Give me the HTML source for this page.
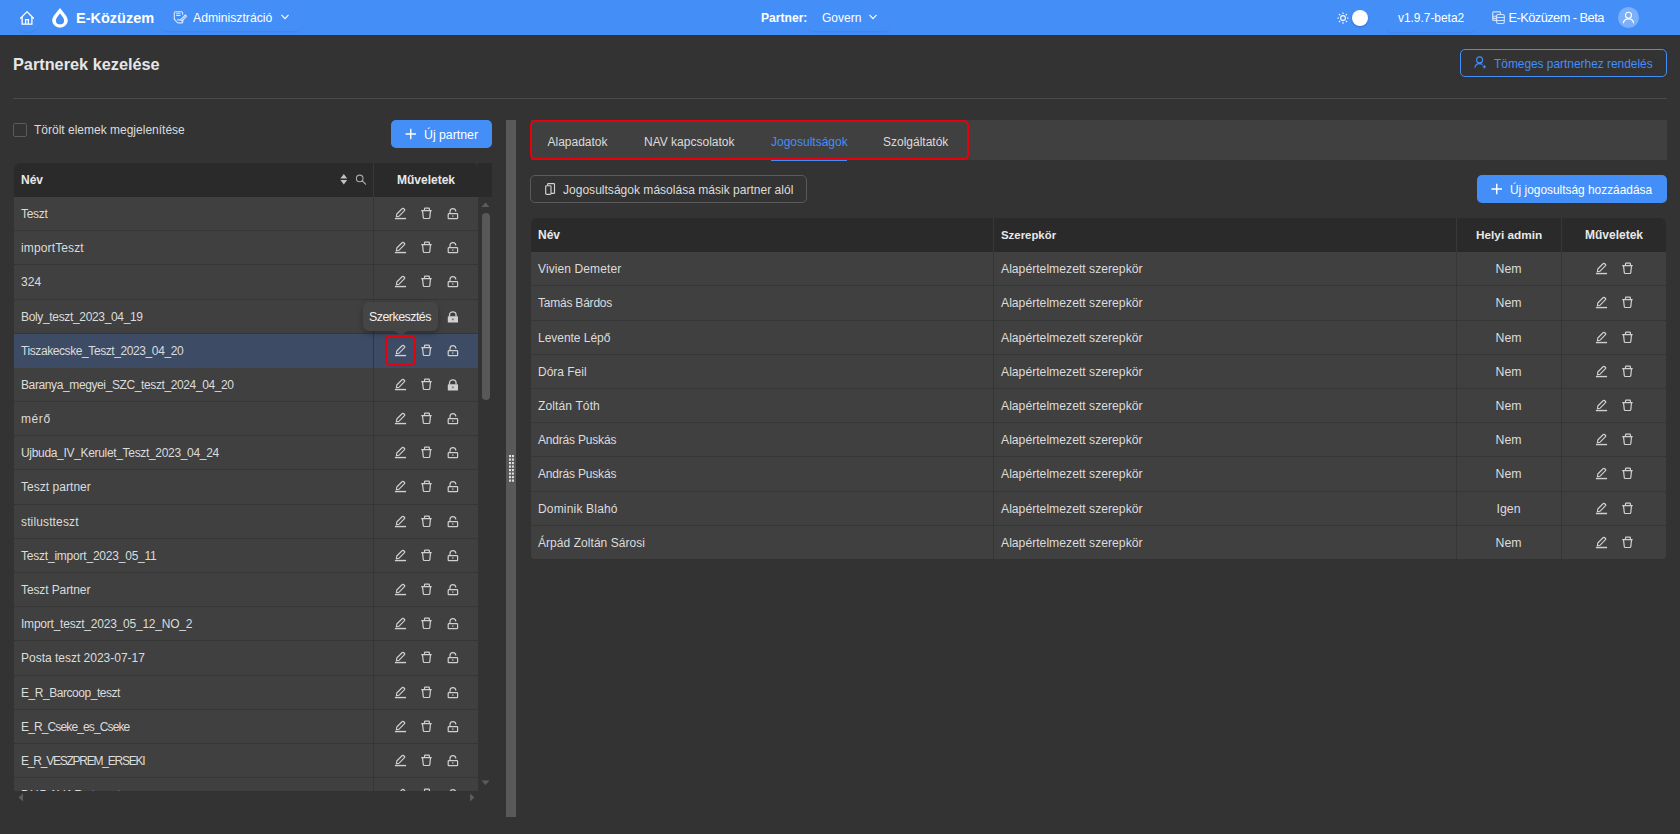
<!DOCTYPE html><html><head><meta charset="utf-8"><title>Partnerek kezelése</title><style>
*{box-sizing:border-box;margin:0;padding:0}
html,body{width:1680px;height:834px;overflow:hidden;background:#333333;font-family:"Liberation Sans",sans-serif;color:#dcdcdc}
.a{position:absolute;white-space:nowrap}
.ic{position:absolute;overflow:visible}
#hdr{position:absolute;left:0;top:0;width:1680px;height:35px;background:#448ef8;color:#fff}
.t12{font-size:12px}
.row{position:absolute;height:34.18px;background:#404040}
.rowdiv{position:absolute;height:1px;background:#363636}
</style></head><body>
<div id="hdr">
<div class="a" style="left:14px;top:5px;width:27px;height:27px;border-radius:14px;box-shadow:0 2px 2px -1px rgba(0,0,0,0.07)"></div>
<div class="a" style="left:160px;top:4px;width:143px;height:27px;border-radius:7px;box-shadow:0 2px 2px -1px rgba(0,0,0,0.07)"></div>
<div class="a" style="left:807px;top:4px;width:84px;height:27px;border-radius:7px;box-shadow:0 2px 2px -1px rgba(0,0,0,0.07)"></div>
<div class="a" style="left:1385px;top:4px;width:92px;height:28px;border-radius:7px;box-shadow:0 2px 2px -1px rgba(0,0,0,0.07)"></div>
<svg class="ic" style="left:19px;top:9px" width="16" height="16" viewBox="0 0 16 16"><path d="M1.6 9.2 L8 2.6 L14.4 9.2" fill="none" stroke="#fff" stroke-width="1.3" stroke-linejoin="round" stroke-linecap="round"/><path d="M3.1 7.9 V15.2 H12.9 V7.9" fill="none" stroke="#fff" stroke-width="1.3"/><path d="M6.6 15.2 V10.6 H9.4 V15.2" fill="none" stroke="#fff" stroke-width="1.3"/></svg>
<svg class="ic" style="left:51px;top:7px" width="18" height="21" viewBox="0 0 18 21"><path d="M9 1 C 6 5, 1.2 9.5, 1.2 13.4 A7.8 7.3 0 0 0 16.8 13.4 C16.8 9.5, 12 5, 9 1 Z M9 6.6 C 7.2 9, 4.9 11.2, 4.9 13.4 A4.1 3.9 0 0 0 13.1 13.4 C13.1 11.2, 10.8 9, 9 6.6 Z" fill="#fff" fill-rule="evenodd"/></svg>
<div class="a" style="left:76px;top:9.6px;font-size:14.5px;font-weight:bold;line-height:17px;letter-spacing:0px">E-Közüzem</div>
<svg class="ic" style="left:173px;top:10px" width="15" height="15" viewBox="0 0 15 15"><g opacity="0.78" fill="none" stroke="#fff" stroke-width="1.15" stroke-linejoin="round" stroke-linecap="round"><path d="M1.3 9.2 V2.8 Q1.3 1.7 2.4 1.7 H8.6 Q9.6 1.7 9.6 2.8 V4.3"/><path d="M1.3 9.2 L4.2 12.3 Q4.6 12.9 5.4 12.9 H8.8 Q9.8 12.9 9.8 11.9 V10.3"/><path d="M3.6 3.2 H7 M3.6 5.4 H7 M4.6 9.8 H7.2"/><path d="M7.6 9.9 L12.3 5 L13.6 6.1 L8.9 11 Z"/></g></svg>
<div class="a" style="left:193px;top:11px;font-size:12.2px;line-height:15px">Adminisztráció</div>
<svg class="ic" style="left:281px;top:14px" width="8" height="6" viewBox="0 0 8 6"><path d="M0.5 0.8 L4 4.6 L7.5 0.8" fill="none" stroke="#fff" stroke-width="1.1"/></svg>
<div class="a" style="left:761px;top:11px;font-size:12.1px;font-weight:bold;line-height:15px">Partner:</div>
<div class="a" style="left:822px;top:11px;font-size:12px;line-height:15px">Govern</div>
<svg class="ic" style="left:869px;top:14px" width="8" height="6" viewBox="0 0 8 6"><path d="M0.5 0.8 L4 4.6 L7.5 0.8" fill="none" stroke="#fff" stroke-width="1.1"/></svg>
<svg class="ic" style="left:1337px;top:12px" width="12" height="12" viewBox="0 0 12 12"><circle cx="6" cy="6" r="2.4" fill="none" stroke="#fff" stroke-width="1.1"/><g stroke="#fff" stroke-width="1.1" stroke-linecap="round"><line x1="6" y1="0.8" x2="6" y2="1.6"/><line x1="6" y1="10.4" x2="6" y2="11.2"/><line x1="0.8" y1="6" x2="1.6" y2="6"/><line x1="10.4" y1="6" x2="11.2" y2="6"/><line x1="2.3" y1="2.3" x2="2.9" y2="2.9"/><line x1="9.1" y1="9.1" x2="9.7" y2="9.7"/><line x1="2.3" y1="9.7" x2="2.9" y2="9.1"/><line x1="9.1" y1="2.9" x2="9.7" y2="2.3"/></g></svg>
<div class="a" style="left:1352px;top:10px;width:16px;height:16px;border-radius:50%;background:#fff;box-shadow:0 1px 2px rgba(0,0,0,0.2)"></div>
<div class="a" style="left:1398px;top:11px;font-size:11.9px;line-height:15px">v1.9.7-beta2</div>
<svg class="ic" style="left:1491px;top:10px" width="15" height="15" viewBox="0 0 15 15"><g opacity="0.75" fill="none" stroke="#fff" stroke-width="1.15"><path d="M5.6 10.4 H2.7 Q1.7 10.4 1.7 9.4 V2.8 Q1.7 1.8 2.7 1.8 H8.5 Q9.5 1.8 9.5 2.8 V4.5 M1.7 6.2 H5.6 M1.7 8.3 H5.6"/><rect x="5.6" y="4.5" width="7.7" height="9" rx="1.5"/><path d="M5.6 7.5 H13.3 M5.6 10.5 H13.3"/></g></svg>
<div class="a" style="left:1508.5px;top:10px;font-size:12.8px;line-height:15px;letter-spacing:-0.536px">E-Közüzem - Beta</div>
<div class="a" style="left:1618px;top:7px;width:21px;height:21px;border-radius:50%;background:rgba(255,255,255,0.3)"></div>
<svg class="ic" style="left:1622px;top:11px" width="13" height="13" viewBox="0 0 13 13"><circle cx="6.5" cy="4.2" r="3" fill="none" stroke="#fff" stroke-width="1.1"/><path d="M1.4 12.3 Q1.8 7.9 6.5 7.9 Q11.2 7.9 11.6 12.3" fill="none" stroke="#fff" stroke-width="1.1"/></svg>
</div>
<div class="a" style="left:13px;top:54.6px;font-size:16.3px;font-weight:bold;line-height:19px;color:#e6e6e6">Partnerek kezelése</div>
<div class="a" style="left:13px;top:98px;width:1654px;height:1px;background:#4a4a4a"></div>
<div class="a" style="left:1460px;top:49px;width:207px;height:28px;border:1px solid #448ef8;border-radius:5px"></div>
<svg class="ic" style="left:1474px;top:56px" width="13" height="13" viewBox="0 0 13 13"><circle cx="5.6" cy="3.9" r="3" fill="none" stroke="#448ef8" stroke-width="1.1"/><path d="M1 11.8 Q1.2 7.6 5.6 7.6 Q7.5 7.6 8.6 8.6" fill="none" stroke="#448ef8" stroke-width="1.1"/><path d="M10.3 9 V12.4 M8.6 10.7 H12" stroke="#448ef8" stroke-width="1.1"/></svg>
<div class="a" style="left:1494px;top:56.5px;font-size:11.9px;line-height:15px;color:#448ef8">Tömeges partnerhez rendelés</div>
<div class="a" style="left:13px;top:122.5px;width:14px;height:14px;border:1px solid #5a5a5a;border-radius:2px"></div>
<div class="a" style="left:34px;top:123px;font-size:12px;line-height:15px">Törölt elemek megjelenítése</div>
<div class="a" style="left:391px;top:120px;width:101px;height:28px;background:#448ef8;border-radius:5px"></div>
<svg class="ic" style="left:405px;top:128px" width="12" height="12" viewBox="0 0 12 12"><path d="M5.75 0.8 V11.2 M0.5 6 H11" stroke="#fff" stroke-width="1.4"/></svg>
<div class="a" style="left:424px;top:128px;font-size:12.3px;line-height:15px;color:#fff">Új partner</div>
<div class="a" style="left:14px;top:163px;width:464px;height:34px;background:#2a2a2a;border-radius:6px 6px 0 0"></div>
<div class="a" style="left:478px;top:163px;width:14px;height:34px;background:#2a2a2a"></div>
<div class="a" style="left:373px;top:163px;width:1px;height:34px;background:#383838"></div>
<div class="a" style="left:21px;top:173px;font-size:12px;font-weight:bold;line-height:15px;color:#e8e8e8">Név</div>
<svg class="ic" style="left:340px;top:174px" width="8" height="11" viewBox="0 0 8 11"><path d="M3.8 0.1 L7.2 4.5 H0.4 Z M3.8 10.5 L7.2 6.1 H0.4 Z" fill="#c2c2c2"/></svg>
<svg class="ic" style="left:355px;top:174px" width="11" height="11" viewBox="0 0 11 11"><circle cx="4.7" cy="4.4" r="3.3" fill="none" stroke="#a9a9a9" stroke-width="1.1"/><path d="M7.1 6.8 L10.6 10.1" stroke="#a9a9a9" stroke-width="1.2" stroke-linecap="round"/></svg>
<div class="a" style="left:397px;top:173px;font-size:12px;font-weight:bold;line-height:15px;color:#e8e8e8">Műveletek</div>
<div class="a" style="left:14px;top:197px;width:464px;height:594px;overflow:hidden">
<div class="a" style="left:0;top:0.0px;width:464px;height:34.18px;background:#404040"></div>
<div class="a" style="left:0;top:33.18px;width:464px;height:1px;background:#363636"></div>
<div class="a" style="left:359px;top:0.0px;width:1px;height:34.18px;background:#363636"></div>
<div class="a" style="left:7px;top:1.0px;font-size:12px;line-height:33.18px;letter-spacing:-0.302px">Teszt</div>
<svg class="ic" style="left:380px;top:10.0px" width="14" height="14" viewBox="0 0 14 14"><path d="M2.4 9.8 L2.8 7 L8.3 1.5 Q8.9 0.9 9.5 1.5 L10.5 2.5 Q11.1 3.1 10.5 3.7 L5.1 9.2 Z" fill="none" stroke="#d0d0d0" stroke-width="1.15" stroke-linejoin="round"/><line x1="0.9" y1="11.55" x2="12.1" y2="11.55" stroke="#d0d0d0" stroke-width="1.4"/></svg>
<svg class="ic" style="left:406px;top:10.0px" width="14" height="14" viewBox="0 0 14 14"><path d="M1.2 3.6 H11.7 M2.5 3.6 L3.3 10.6 Q3.4 11.5 4.3 11.5 H8.8 Q9.7 11.5 9.8 10.6 L10.5 3.6 M4.5 3.4 V1.9 Q4.5 1.2 5.2 1.2 H8.7 Q9.4 1.2 9.4 1.9 V3.4" fill="none" stroke="#d0d0d0" stroke-width="1.2" stroke-linejoin="round"/></svg>
<svg class="ic" style="left:432px;top:10.0px" width="14" height="14" viewBox="0 0 14 14"><rect x="2.2" y="6.7" width="9.4" height="5" rx="0.7" fill="none" stroke="#d0d0d0" stroke-width="1.2"/><path d="M4 6.7 V4.6 A2.9 2.9 0 0 1 9.8 4.6 V4.2" fill="none" stroke="#d0d0d0" stroke-width="1.2"/><rect x="6.2" y="8.4" width="1.2" height="1.3" fill="#d0d0d0"/></svg>
<div class="a" style="left:0;top:34.18px;width:464px;height:34.18px;background:#404040"></div>
<div class="a" style="left:0;top:67.36px;width:464px;height:1px;background:#363636"></div>
<div class="a" style="left:359px;top:34.18px;width:1px;height:34.18px;background:#363636"></div>
<div class="a" style="left:7px;top:35.18px;font-size:12px;line-height:33.18px;letter-spacing:0.135px">importTeszt</div>
<svg class="ic" style="left:380px;top:44.18px" width="14" height="14" viewBox="0 0 14 14"><path d="M2.4 9.8 L2.8 7 L8.3 1.5 Q8.9 0.9 9.5 1.5 L10.5 2.5 Q11.1 3.1 10.5 3.7 L5.1 9.2 Z" fill="none" stroke="#d0d0d0" stroke-width="1.15" stroke-linejoin="round"/><line x1="0.9" y1="11.55" x2="12.1" y2="11.55" stroke="#d0d0d0" stroke-width="1.4"/></svg>
<svg class="ic" style="left:406px;top:44.18px" width="14" height="14" viewBox="0 0 14 14"><path d="M1.2 3.6 H11.7 M2.5 3.6 L3.3 10.6 Q3.4 11.5 4.3 11.5 H8.8 Q9.7 11.5 9.8 10.6 L10.5 3.6 M4.5 3.4 V1.9 Q4.5 1.2 5.2 1.2 H8.7 Q9.4 1.2 9.4 1.9 V3.4" fill="none" stroke="#d0d0d0" stroke-width="1.2" stroke-linejoin="round"/></svg>
<svg class="ic" style="left:432px;top:44.18px" width="14" height="14" viewBox="0 0 14 14"><rect x="2.2" y="6.7" width="9.4" height="5" rx="0.7" fill="none" stroke="#d0d0d0" stroke-width="1.2"/><path d="M4 6.7 V4.6 A2.9 2.9 0 0 1 9.8 4.6 V4.2" fill="none" stroke="#d0d0d0" stroke-width="1.2"/><rect x="6.2" y="8.4" width="1.2" height="1.3" fill="#d0d0d0"/></svg>
<div class="a" style="left:0;top:68.36px;width:464px;height:34.18px;background:#404040"></div>
<div class="a" style="left:0;top:101.53999999999999px;width:464px;height:1px;background:#363636"></div>
<div class="a" style="left:359px;top:68.36px;width:1px;height:34.18px;background:#363636"></div>
<div class="a" style="left:7px;top:69.36px;font-size:12px;line-height:33.18px;letter-spacing:0.089px">324</div>
<svg class="ic" style="left:380px;top:78.36px" width="14" height="14" viewBox="0 0 14 14"><path d="M2.4 9.8 L2.8 7 L8.3 1.5 Q8.9 0.9 9.5 1.5 L10.5 2.5 Q11.1 3.1 10.5 3.7 L5.1 9.2 Z" fill="none" stroke="#d0d0d0" stroke-width="1.15" stroke-linejoin="round"/><line x1="0.9" y1="11.55" x2="12.1" y2="11.55" stroke="#d0d0d0" stroke-width="1.4"/></svg>
<svg class="ic" style="left:406px;top:78.36px" width="14" height="14" viewBox="0 0 14 14"><path d="M1.2 3.6 H11.7 M2.5 3.6 L3.3 10.6 Q3.4 11.5 4.3 11.5 H8.8 Q9.7 11.5 9.8 10.6 L10.5 3.6 M4.5 3.4 V1.9 Q4.5 1.2 5.2 1.2 H8.7 Q9.4 1.2 9.4 1.9 V3.4" fill="none" stroke="#d0d0d0" stroke-width="1.2" stroke-linejoin="round"/></svg>
<svg class="ic" style="left:432px;top:78.36px" width="14" height="14" viewBox="0 0 14 14"><rect x="2.2" y="6.7" width="9.4" height="5" rx="0.7" fill="none" stroke="#d0d0d0" stroke-width="1.2"/><path d="M4 6.7 V4.6 A2.9 2.9 0 0 1 9.8 4.6 V4.2" fill="none" stroke="#d0d0d0" stroke-width="1.2"/><rect x="6.2" y="8.4" width="1.2" height="1.3" fill="#d0d0d0"/></svg>
<div class="a" style="left:0;top:102.53999999999999px;width:464px;height:34.18px;background:#404040"></div>
<div class="a" style="left:0;top:135.72px;width:464px;height:1px;background:#363636"></div>
<div class="a" style="left:359px;top:102.53999999999999px;width:1px;height:34.18px;background:#363636"></div>
<div class="a" style="left:7px;top:103.53999999999999px;font-size:12px;line-height:33.18px;letter-spacing:-0.339px">Boly_teszt_2023_04_19</div>
<svg class="ic" style="left:380px;top:112.53999999999999px" width="14" height="14" viewBox="0 0 14 14"><path d="M2.4 9.8 L2.8 7 L8.3 1.5 Q8.9 0.9 9.5 1.5 L10.5 2.5 Q11.1 3.1 10.5 3.7 L5.1 9.2 Z" fill="none" stroke="#d0d0d0" stroke-width="1.15" stroke-linejoin="round"/><line x1="0.9" y1="11.55" x2="12.1" y2="11.55" stroke="#d0d0d0" stroke-width="1.4"/></svg>
<svg class="ic" style="left:406px;top:112.53999999999999px" width="14" height="14" viewBox="0 0 14 14"><path d="M1.2 3.6 H11.7 M2.5 3.6 L3.3 10.6 Q3.4 11.5 4.3 11.5 H8.8 Q9.7 11.5 9.8 10.6 L10.5 3.6 M4.5 3.4 V1.9 Q4.5 1.2 5.2 1.2 H8.7 Q9.4 1.2 9.4 1.9 V3.4" fill="none" stroke="#d0d0d0" stroke-width="1.2" stroke-linejoin="round"/></svg>
<svg class="ic" style="left:432px;top:112.53999999999999px" width="14" height="14" viewBox="0 0 14 14"><path d="M3.55 6.5 V4.9 A3.25 3.05 0 0 1 10.05 4.9 V6.5" fill="none" stroke="#d0d0d0" stroke-width="1.3"/><rect x="1.8" y="6.3" width="10.2" height="6.2" rx="0.6" fill="#d0d0d0"/><rect x="5.9" y="8.5" width="1.9" height="1.7" fill="#7a7a7a"/></svg>
<div class="a" style="left:0;top:136.72px;width:464px;height:34.18px;background:#3d4c64"></div>
<div class="a" style="left:359px;top:136.72px;width:1px;height:34.18px;background:#363636"></div>
<div class="a" style="left:7px;top:137.72px;font-size:12px;line-height:33.18px;letter-spacing:-0.41px">Tiszakecske_Teszt_2023_04_20</div>
<svg class="ic" style="left:380px;top:146.72px" width="14" height="14" viewBox="0 0 14 14"><path d="M2.4 9.8 L2.8 7 L8.3 1.5 Q8.9 0.9 9.5 1.5 L10.5 2.5 Q11.1 3.1 10.5 3.7 L5.1 9.2 Z" fill="none" stroke="#d0d0d0" stroke-width="1.15" stroke-linejoin="round"/><line x1="0.9" y1="11.55" x2="12.1" y2="11.55" stroke="#d0d0d0" stroke-width="1.4"/></svg>
<svg class="ic" style="left:406px;top:146.72px" width="14" height="14" viewBox="0 0 14 14"><path d="M1.2 3.6 H11.7 M2.5 3.6 L3.3 10.6 Q3.4 11.5 4.3 11.5 H8.8 Q9.7 11.5 9.8 10.6 L10.5 3.6 M4.5 3.4 V1.9 Q4.5 1.2 5.2 1.2 H8.7 Q9.4 1.2 9.4 1.9 V3.4" fill="none" stroke="#d0d0d0" stroke-width="1.2" stroke-linejoin="round"/></svg>
<svg class="ic" style="left:432px;top:146.72px" width="14" height="14" viewBox="0 0 14 14"><rect x="2.2" y="6.7" width="9.4" height="5" rx="0.7" fill="none" stroke="#d0d0d0" stroke-width="1.2"/><path d="M4 6.7 V4.6 A2.9 2.9 0 0 1 9.8 4.6 V4.2" fill="none" stroke="#d0d0d0" stroke-width="1.2"/><rect x="6.2" y="8.4" width="1.2" height="1.3" fill="#d0d0d0"/></svg>
<div class="a" style="left:0;top:170.9px;width:464px;height:34.18px;background:#404040"></div>
<div class="a" style="left:0;top:204.08px;width:464px;height:1px;background:#363636"></div>
<div class="a" style="left:359px;top:170.9px;width:1px;height:34.18px;background:#363636"></div>
<div class="a" style="left:7px;top:171.9px;font-size:12px;line-height:33.18px;letter-spacing:-0.387px">Baranya_megyei_SZC_teszt_2024_04_20</div>
<svg class="ic" style="left:380px;top:180.9px" width="14" height="14" viewBox="0 0 14 14"><path d="M2.4 9.8 L2.8 7 L8.3 1.5 Q8.9 0.9 9.5 1.5 L10.5 2.5 Q11.1 3.1 10.5 3.7 L5.1 9.2 Z" fill="none" stroke="#d0d0d0" stroke-width="1.15" stroke-linejoin="round"/><line x1="0.9" y1="11.55" x2="12.1" y2="11.55" stroke="#d0d0d0" stroke-width="1.4"/></svg>
<svg class="ic" style="left:406px;top:180.9px" width="14" height="14" viewBox="0 0 14 14"><path d="M1.2 3.6 H11.7 M2.5 3.6 L3.3 10.6 Q3.4 11.5 4.3 11.5 H8.8 Q9.7 11.5 9.8 10.6 L10.5 3.6 M4.5 3.4 V1.9 Q4.5 1.2 5.2 1.2 H8.7 Q9.4 1.2 9.4 1.9 V3.4" fill="none" stroke="#d0d0d0" stroke-width="1.2" stroke-linejoin="round"/></svg>
<svg class="ic" style="left:432px;top:180.9px" width="14" height="14" viewBox="0 0 14 14"><path d="M3.55 6.5 V4.9 A3.25 3.05 0 0 1 10.05 4.9 V6.5" fill="none" stroke="#d0d0d0" stroke-width="1.3"/><rect x="1.8" y="6.3" width="10.2" height="6.2" rx="0.6" fill="#d0d0d0"/><rect x="5.9" y="8.5" width="1.9" height="1.7" fill="#7a7a7a"/></svg>
<div class="a" style="left:0;top:205.07999999999998px;width:464px;height:34.18px;background:#404040"></div>
<div class="a" style="left:0;top:238.26px;width:464px;height:1px;background:#363636"></div>
<div class="a" style="left:359px;top:205.07999999999998px;width:1px;height:34.18px;background:#363636"></div>
<div class="a" style="left:7px;top:206.07999999999998px;font-size:12px;line-height:33.18px;letter-spacing:0.587px">mérő</div>
<svg class="ic" style="left:380px;top:215.07999999999998px" width="14" height="14" viewBox="0 0 14 14"><path d="M2.4 9.8 L2.8 7 L8.3 1.5 Q8.9 0.9 9.5 1.5 L10.5 2.5 Q11.1 3.1 10.5 3.7 L5.1 9.2 Z" fill="none" stroke="#d0d0d0" stroke-width="1.15" stroke-linejoin="round"/><line x1="0.9" y1="11.55" x2="12.1" y2="11.55" stroke="#d0d0d0" stroke-width="1.4"/></svg>
<svg class="ic" style="left:406px;top:215.07999999999998px" width="14" height="14" viewBox="0 0 14 14"><path d="M1.2 3.6 H11.7 M2.5 3.6 L3.3 10.6 Q3.4 11.5 4.3 11.5 H8.8 Q9.7 11.5 9.8 10.6 L10.5 3.6 M4.5 3.4 V1.9 Q4.5 1.2 5.2 1.2 H8.7 Q9.4 1.2 9.4 1.9 V3.4" fill="none" stroke="#d0d0d0" stroke-width="1.2" stroke-linejoin="round"/></svg>
<svg class="ic" style="left:432px;top:215.07999999999998px" width="14" height="14" viewBox="0 0 14 14"><rect x="2.2" y="6.7" width="9.4" height="5" rx="0.7" fill="none" stroke="#d0d0d0" stroke-width="1.2"/><path d="M4 6.7 V4.6 A2.9 2.9 0 0 1 9.8 4.6 V4.2" fill="none" stroke="#d0d0d0" stroke-width="1.2"/><rect x="6.2" y="8.4" width="1.2" height="1.3" fill="#d0d0d0"/></svg>
<div class="a" style="left:0;top:239.26px;width:464px;height:34.18px;background:#404040"></div>
<div class="a" style="left:0;top:272.44px;width:464px;height:1px;background:#363636"></div>
<div class="a" style="left:359px;top:239.26px;width:1px;height:34.18px;background:#363636"></div>
<div class="a" style="left:7px;top:240.26px;font-size:12px;line-height:33.18px;letter-spacing:-0.322px">Ujbuda_IV_Kerulet_Teszt_2023_04_24</div>
<svg class="ic" style="left:380px;top:249.26px" width="14" height="14" viewBox="0 0 14 14"><path d="M2.4 9.8 L2.8 7 L8.3 1.5 Q8.9 0.9 9.5 1.5 L10.5 2.5 Q11.1 3.1 10.5 3.7 L5.1 9.2 Z" fill="none" stroke="#d0d0d0" stroke-width="1.15" stroke-linejoin="round"/><line x1="0.9" y1="11.55" x2="12.1" y2="11.55" stroke="#d0d0d0" stroke-width="1.4"/></svg>
<svg class="ic" style="left:406px;top:249.26px" width="14" height="14" viewBox="0 0 14 14"><path d="M1.2 3.6 H11.7 M2.5 3.6 L3.3 10.6 Q3.4 11.5 4.3 11.5 H8.8 Q9.7 11.5 9.8 10.6 L10.5 3.6 M4.5 3.4 V1.9 Q4.5 1.2 5.2 1.2 H8.7 Q9.4 1.2 9.4 1.9 V3.4" fill="none" stroke="#d0d0d0" stroke-width="1.2" stroke-linejoin="round"/></svg>
<svg class="ic" style="left:432px;top:249.26px" width="14" height="14" viewBox="0 0 14 14"><rect x="2.2" y="6.7" width="9.4" height="5" rx="0.7" fill="none" stroke="#d0d0d0" stroke-width="1.2"/><path d="M4 6.7 V4.6 A2.9 2.9 0 0 1 9.8 4.6 V4.2" fill="none" stroke="#d0d0d0" stroke-width="1.2"/><rect x="6.2" y="8.4" width="1.2" height="1.3" fill="#d0d0d0"/></svg>
<div class="a" style="left:0;top:273.44px;width:464px;height:34.18px;background:#404040"></div>
<div class="a" style="left:0;top:306.62px;width:464px;height:1px;background:#363636"></div>
<div class="a" style="left:359px;top:273.44px;width:1px;height:34.18px;background:#363636"></div>
<div class="a" style="left:7px;top:274.44px;font-size:12px;line-height:33.18px;letter-spacing:0.036px">Teszt partner</div>
<svg class="ic" style="left:380px;top:283.44px" width="14" height="14" viewBox="0 0 14 14"><path d="M2.4 9.8 L2.8 7 L8.3 1.5 Q8.9 0.9 9.5 1.5 L10.5 2.5 Q11.1 3.1 10.5 3.7 L5.1 9.2 Z" fill="none" stroke="#d0d0d0" stroke-width="1.15" stroke-linejoin="round"/><line x1="0.9" y1="11.55" x2="12.1" y2="11.55" stroke="#d0d0d0" stroke-width="1.4"/></svg>
<svg class="ic" style="left:406px;top:283.44px" width="14" height="14" viewBox="0 0 14 14"><path d="M1.2 3.6 H11.7 M2.5 3.6 L3.3 10.6 Q3.4 11.5 4.3 11.5 H8.8 Q9.7 11.5 9.8 10.6 L10.5 3.6 M4.5 3.4 V1.9 Q4.5 1.2 5.2 1.2 H8.7 Q9.4 1.2 9.4 1.9 V3.4" fill="none" stroke="#d0d0d0" stroke-width="1.2" stroke-linejoin="round"/></svg>
<svg class="ic" style="left:432px;top:283.44px" width="14" height="14" viewBox="0 0 14 14"><rect x="2.2" y="6.7" width="9.4" height="5" rx="0.7" fill="none" stroke="#d0d0d0" stroke-width="1.2"/><path d="M4 6.7 V4.6 A2.9 2.9 0 0 1 9.8 4.6 V4.2" fill="none" stroke="#d0d0d0" stroke-width="1.2"/><rect x="6.2" y="8.4" width="1.2" height="1.3" fill="#d0d0d0"/></svg>
<div class="a" style="left:0;top:307.62px;width:464px;height:34.18px;background:#404040"></div>
<div class="a" style="left:0;top:340.8px;width:464px;height:1px;background:#363636"></div>
<div class="a" style="left:359px;top:307.62px;width:1px;height:34.18px;background:#363636"></div>
<div class="a" style="left:7px;top:308.62px;font-size:12px;line-height:33.18px;letter-spacing:0.135px">stilustteszt</div>
<svg class="ic" style="left:380px;top:317.62px" width="14" height="14" viewBox="0 0 14 14"><path d="M2.4 9.8 L2.8 7 L8.3 1.5 Q8.9 0.9 9.5 1.5 L10.5 2.5 Q11.1 3.1 10.5 3.7 L5.1 9.2 Z" fill="none" stroke="#d0d0d0" stroke-width="1.15" stroke-linejoin="round"/><line x1="0.9" y1="11.55" x2="12.1" y2="11.55" stroke="#d0d0d0" stroke-width="1.4"/></svg>
<svg class="ic" style="left:406px;top:317.62px" width="14" height="14" viewBox="0 0 14 14"><path d="M1.2 3.6 H11.7 M2.5 3.6 L3.3 10.6 Q3.4 11.5 4.3 11.5 H8.8 Q9.7 11.5 9.8 10.6 L10.5 3.6 M4.5 3.4 V1.9 Q4.5 1.2 5.2 1.2 H8.7 Q9.4 1.2 9.4 1.9 V3.4" fill="none" stroke="#d0d0d0" stroke-width="1.2" stroke-linejoin="round"/></svg>
<svg class="ic" style="left:432px;top:317.62px" width="14" height="14" viewBox="0 0 14 14"><rect x="2.2" y="6.7" width="9.4" height="5" rx="0.7" fill="none" stroke="#d0d0d0" stroke-width="1.2"/><path d="M4 6.7 V4.6 A2.9 2.9 0 0 1 9.8 4.6 V4.2" fill="none" stroke="#d0d0d0" stroke-width="1.2"/><rect x="6.2" y="8.4" width="1.2" height="1.3" fill="#d0d0d0"/></svg>
<div class="a" style="left:0;top:341.8px;width:464px;height:34.18px;background:#404040"></div>
<div class="a" style="left:0;top:374.98px;width:464px;height:1px;background:#363636"></div>
<div class="a" style="left:359px;top:341.8px;width:1px;height:34.18px;background:#363636"></div>
<div class="a" style="left:7px;top:342.8px;font-size:12px;line-height:33.18px;letter-spacing:-0.216px">Teszt_import_2023_05_11</div>
<svg class="ic" style="left:380px;top:351.8px" width="14" height="14" viewBox="0 0 14 14"><path d="M2.4 9.8 L2.8 7 L8.3 1.5 Q8.9 0.9 9.5 1.5 L10.5 2.5 Q11.1 3.1 10.5 3.7 L5.1 9.2 Z" fill="none" stroke="#d0d0d0" stroke-width="1.15" stroke-linejoin="round"/><line x1="0.9" y1="11.55" x2="12.1" y2="11.55" stroke="#d0d0d0" stroke-width="1.4"/></svg>
<svg class="ic" style="left:406px;top:351.8px" width="14" height="14" viewBox="0 0 14 14"><path d="M1.2 3.6 H11.7 M2.5 3.6 L3.3 10.6 Q3.4 11.5 4.3 11.5 H8.8 Q9.7 11.5 9.8 10.6 L10.5 3.6 M4.5 3.4 V1.9 Q4.5 1.2 5.2 1.2 H8.7 Q9.4 1.2 9.4 1.9 V3.4" fill="none" stroke="#d0d0d0" stroke-width="1.2" stroke-linejoin="round"/></svg>
<svg class="ic" style="left:432px;top:351.8px" width="14" height="14" viewBox="0 0 14 14"><rect x="2.2" y="6.7" width="9.4" height="5" rx="0.7" fill="none" stroke="#d0d0d0" stroke-width="1.2"/><path d="M4 6.7 V4.6 A2.9 2.9 0 0 1 9.8 4.6 V4.2" fill="none" stroke="#d0d0d0" stroke-width="1.2"/><rect x="6.2" y="8.4" width="1.2" height="1.3" fill="#d0d0d0"/></svg>
<div class="a" style="left:0;top:375.98px;width:464px;height:34.18px;background:#404040"></div>
<div class="a" style="left:0;top:409.16px;width:464px;height:1px;background:#363636"></div>
<div class="a" style="left:359px;top:375.98px;width:1px;height:34.18px;background:#363636"></div>
<div class="a" style="left:7px;top:376.98px;font-size:12px;line-height:33.18px;letter-spacing:-0.108px">Teszt Partner</div>
<svg class="ic" style="left:380px;top:385.98px" width="14" height="14" viewBox="0 0 14 14"><path d="M2.4 9.8 L2.8 7 L8.3 1.5 Q8.9 0.9 9.5 1.5 L10.5 2.5 Q11.1 3.1 10.5 3.7 L5.1 9.2 Z" fill="none" stroke="#d0d0d0" stroke-width="1.15" stroke-linejoin="round"/><line x1="0.9" y1="11.55" x2="12.1" y2="11.55" stroke="#d0d0d0" stroke-width="1.4"/></svg>
<svg class="ic" style="left:406px;top:385.98px" width="14" height="14" viewBox="0 0 14 14"><path d="M1.2 3.6 H11.7 M2.5 3.6 L3.3 10.6 Q3.4 11.5 4.3 11.5 H8.8 Q9.7 11.5 9.8 10.6 L10.5 3.6 M4.5 3.4 V1.9 Q4.5 1.2 5.2 1.2 H8.7 Q9.4 1.2 9.4 1.9 V3.4" fill="none" stroke="#d0d0d0" stroke-width="1.2" stroke-linejoin="round"/></svg>
<svg class="ic" style="left:432px;top:385.98px" width="14" height="14" viewBox="0 0 14 14"><rect x="2.2" y="6.7" width="9.4" height="5" rx="0.7" fill="none" stroke="#d0d0d0" stroke-width="1.2"/><path d="M4 6.7 V4.6 A2.9 2.9 0 0 1 9.8 4.6 V4.2" fill="none" stroke="#d0d0d0" stroke-width="1.2"/><rect x="6.2" y="8.4" width="1.2" height="1.3" fill="#d0d0d0"/></svg>
<div class="a" style="left:0;top:410.15999999999997px;width:464px;height:34.18px;background:#404040"></div>
<div class="a" style="left:0;top:443.34px;width:464px;height:1px;background:#363636"></div>
<div class="a" style="left:359px;top:410.15999999999997px;width:1px;height:34.18px;background:#363636"></div>
<div class="a" style="left:7px;top:411.15999999999997px;font-size:12px;line-height:33.18px;letter-spacing:-0.224px">Import_teszt_2023_05_12_NO_2</div>
<svg class="ic" style="left:380px;top:420.15999999999997px" width="14" height="14" viewBox="0 0 14 14"><path d="M2.4 9.8 L2.8 7 L8.3 1.5 Q8.9 0.9 9.5 1.5 L10.5 2.5 Q11.1 3.1 10.5 3.7 L5.1 9.2 Z" fill="none" stroke="#d0d0d0" stroke-width="1.15" stroke-linejoin="round"/><line x1="0.9" y1="11.55" x2="12.1" y2="11.55" stroke="#d0d0d0" stroke-width="1.4"/></svg>
<svg class="ic" style="left:406px;top:420.15999999999997px" width="14" height="14" viewBox="0 0 14 14"><path d="M1.2 3.6 H11.7 M2.5 3.6 L3.3 10.6 Q3.4 11.5 4.3 11.5 H8.8 Q9.7 11.5 9.8 10.6 L10.5 3.6 M4.5 3.4 V1.9 Q4.5 1.2 5.2 1.2 H8.7 Q9.4 1.2 9.4 1.9 V3.4" fill="none" stroke="#d0d0d0" stroke-width="1.2" stroke-linejoin="round"/></svg>
<svg class="ic" style="left:432px;top:420.15999999999997px" width="14" height="14" viewBox="0 0 14 14"><rect x="2.2" y="6.7" width="9.4" height="5" rx="0.7" fill="none" stroke="#d0d0d0" stroke-width="1.2"/><path d="M4 6.7 V4.6 A2.9 2.9 0 0 1 9.8 4.6 V4.2" fill="none" stroke="#d0d0d0" stroke-width="1.2"/><rect x="6.2" y="8.4" width="1.2" height="1.3" fill="#d0d0d0"/></svg>
<div class="a" style="left:0;top:444.34px;width:464px;height:34.18px;background:#404040"></div>
<div class="a" style="left:0;top:477.52px;width:464px;height:1px;background:#363636"></div>
<div class="a" style="left:359px;top:444.34px;width:1px;height:34.18px;background:#363636"></div>
<div class="a" style="left:7px;top:445.34px;font-size:12px;line-height:33.18px;letter-spacing:-0.008px">Posta teszt 2023-07-17</div>
<svg class="ic" style="left:380px;top:454.34px" width="14" height="14" viewBox="0 0 14 14"><path d="M2.4 9.8 L2.8 7 L8.3 1.5 Q8.9 0.9 9.5 1.5 L10.5 2.5 Q11.1 3.1 10.5 3.7 L5.1 9.2 Z" fill="none" stroke="#d0d0d0" stroke-width="1.15" stroke-linejoin="round"/><line x1="0.9" y1="11.55" x2="12.1" y2="11.55" stroke="#d0d0d0" stroke-width="1.4"/></svg>
<svg class="ic" style="left:406px;top:454.34px" width="14" height="14" viewBox="0 0 14 14"><path d="M1.2 3.6 H11.7 M2.5 3.6 L3.3 10.6 Q3.4 11.5 4.3 11.5 H8.8 Q9.7 11.5 9.8 10.6 L10.5 3.6 M4.5 3.4 V1.9 Q4.5 1.2 5.2 1.2 H8.7 Q9.4 1.2 9.4 1.9 V3.4" fill="none" stroke="#d0d0d0" stroke-width="1.2" stroke-linejoin="round"/></svg>
<svg class="ic" style="left:432px;top:454.34px" width="14" height="14" viewBox="0 0 14 14"><rect x="2.2" y="6.7" width="9.4" height="5" rx="0.7" fill="none" stroke="#d0d0d0" stroke-width="1.2"/><path d="M4 6.7 V4.6 A2.9 2.9 0 0 1 9.8 4.6 V4.2" fill="none" stroke="#d0d0d0" stroke-width="1.2"/><rect x="6.2" y="8.4" width="1.2" height="1.3" fill="#d0d0d0"/></svg>
<div class="a" style="left:0;top:478.52px;width:464px;height:34.18px;background:#404040"></div>
<div class="a" style="left:0;top:511.69999999999993px;width:464px;height:1px;background:#363636"></div>
<div class="a" style="left:359px;top:478.52px;width:1px;height:34.18px;background:#363636"></div>
<div class="a" style="left:7px;top:479.52px;font-size:12px;line-height:33.18px;letter-spacing:-0.458px">E_R_Barcoop_teszt</div>
<svg class="ic" style="left:380px;top:488.52px" width="14" height="14" viewBox="0 0 14 14"><path d="M2.4 9.8 L2.8 7 L8.3 1.5 Q8.9 0.9 9.5 1.5 L10.5 2.5 Q11.1 3.1 10.5 3.7 L5.1 9.2 Z" fill="none" stroke="#d0d0d0" stroke-width="1.15" stroke-linejoin="round"/><line x1="0.9" y1="11.55" x2="12.1" y2="11.55" stroke="#d0d0d0" stroke-width="1.4"/></svg>
<svg class="ic" style="left:406px;top:488.52px" width="14" height="14" viewBox="0 0 14 14"><path d="M1.2 3.6 H11.7 M2.5 3.6 L3.3 10.6 Q3.4 11.5 4.3 11.5 H8.8 Q9.7 11.5 9.8 10.6 L10.5 3.6 M4.5 3.4 V1.9 Q4.5 1.2 5.2 1.2 H8.7 Q9.4 1.2 9.4 1.9 V3.4" fill="none" stroke="#d0d0d0" stroke-width="1.2" stroke-linejoin="round"/></svg>
<svg class="ic" style="left:432px;top:488.52px" width="14" height="14" viewBox="0 0 14 14"><rect x="2.2" y="6.7" width="9.4" height="5" rx="0.7" fill="none" stroke="#d0d0d0" stroke-width="1.2"/><path d="M4 6.7 V4.6 A2.9 2.9 0 0 1 9.8 4.6 V4.2" fill="none" stroke="#d0d0d0" stroke-width="1.2"/><rect x="6.2" y="8.4" width="1.2" height="1.3" fill="#d0d0d0"/></svg>
<div class="a" style="left:0;top:512.7px;width:464px;height:34.18px;background:#404040"></div>
<div class="a" style="left:0;top:545.88px;width:464px;height:1px;background:#363636"></div>
<div class="a" style="left:359px;top:512.7px;width:1px;height:34.18px;background:#363636"></div>
<div class="a" style="left:7px;top:513.7px;font-size:12px;line-height:33.18px;letter-spacing:-0.869px">E_R_Cseke_es_Cseke</div>
<svg class="ic" style="left:380px;top:522.7px" width="14" height="14" viewBox="0 0 14 14"><path d="M2.4 9.8 L2.8 7 L8.3 1.5 Q8.9 0.9 9.5 1.5 L10.5 2.5 Q11.1 3.1 10.5 3.7 L5.1 9.2 Z" fill="none" stroke="#d0d0d0" stroke-width="1.15" stroke-linejoin="round"/><line x1="0.9" y1="11.55" x2="12.1" y2="11.55" stroke="#d0d0d0" stroke-width="1.4"/></svg>
<svg class="ic" style="left:406px;top:522.7px" width="14" height="14" viewBox="0 0 14 14"><path d="M1.2 3.6 H11.7 M2.5 3.6 L3.3 10.6 Q3.4 11.5 4.3 11.5 H8.8 Q9.7 11.5 9.8 10.6 L10.5 3.6 M4.5 3.4 V1.9 Q4.5 1.2 5.2 1.2 H8.7 Q9.4 1.2 9.4 1.9 V3.4" fill="none" stroke="#d0d0d0" stroke-width="1.2" stroke-linejoin="round"/></svg>
<svg class="ic" style="left:432px;top:522.7px" width="14" height="14" viewBox="0 0 14 14"><rect x="2.2" y="6.7" width="9.4" height="5" rx="0.7" fill="none" stroke="#d0d0d0" stroke-width="1.2"/><path d="M4 6.7 V4.6 A2.9 2.9 0 0 1 9.8 4.6 V4.2" fill="none" stroke="#d0d0d0" stroke-width="1.2"/><rect x="6.2" y="8.4" width="1.2" height="1.3" fill="#d0d0d0"/></svg>
<div class="a" style="left:0;top:546.88px;width:464px;height:34.18px;background:#404040"></div>
<div class="a" style="left:0;top:580.06px;width:464px;height:1px;background:#363636"></div>
<div class="a" style="left:359px;top:546.88px;width:1px;height:34.18px;background:#363636"></div>
<div class="a" style="left:7px;top:547.88px;font-size:12px;line-height:33.18px;letter-spacing:-1.223px">E_R_VESZPREM_ERSEKI</div>
<svg class="ic" style="left:380px;top:556.88px" width="14" height="14" viewBox="0 0 14 14"><path d="M2.4 9.8 L2.8 7 L8.3 1.5 Q8.9 0.9 9.5 1.5 L10.5 2.5 Q11.1 3.1 10.5 3.7 L5.1 9.2 Z" fill="none" stroke="#d0d0d0" stroke-width="1.15" stroke-linejoin="round"/><line x1="0.9" y1="11.55" x2="12.1" y2="11.55" stroke="#d0d0d0" stroke-width="1.4"/></svg>
<svg class="ic" style="left:406px;top:556.88px" width="14" height="14" viewBox="0 0 14 14"><path d="M1.2 3.6 H11.7 M2.5 3.6 L3.3 10.6 Q3.4 11.5 4.3 11.5 H8.8 Q9.7 11.5 9.8 10.6 L10.5 3.6 M4.5 3.4 V1.9 Q4.5 1.2 5.2 1.2 H8.7 Q9.4 1.2 9.4 1.9 V3.4" fill="none" stroke="#d0d0d0" stroke-width="1.2" stroke-linejoin="round"/></svg>
<svg class="ic" style="left:432px;top:556.88px" width="14" height="14" viewBox="0 0 14 14"><rect x="2.2" y="6.7" width="9.4" height="5" rx="0.7" fill="none" stroke="#d0d0d0" stroke-width="1.2"/><path d="M4 6.7 V4.6 A2.9 2.9 0 0 1 9.8 4.6 V4.2" fill="none" stroke="#d0d0d0" stroke-width="1.2"/><rect x="6.2" y="8.4" width="1.2" height="1.3" fill="#d0d0d0"/></svg>
<div class="a" style="left:0;top:581.06px;width:464px;height:34.18px;background:#404040"></div>
<div class="a" style="left:0;top:614.2399999999999px;width:464px;height:1px;background:#363636"></div>
<div class="a" style="left:359px;top:581.06px;width:1px;height:34.18px;background:#363636"></div>
<div class="a" style="left:7px;top:582.06px;font-size:12px;line-height:33.18px;letter-spacing:0.938px">BUDAVAR_teszt</div>
<svg class="ic" style="left:380px;top:591.06px" width="14" height="14" viewBox="0 0 14 14"><path d="M2.4 9.8 L2.8 7 L8.3 1.5 Q8.9 0.9 9.5 1.5 L10.5 2.5 Q11.1 3.1 10.5 3.7 L5.1 9.2 Z" fill="none" stroke="#d0d0d0" stroke-width="1.15" stroke-linejoin="round"/><line x1="0.9" y1="11.55" x2="12.1" y2="11.55" stroke="#d0d0d0" stroke-width="1.4"/></svg>
<svg class="ic" style="left:406px;top:591.06px" width="14" height="14" viewBox="0 0 14 14"><path d="M1.2 3.6 H11.7 M2.5 3.6 L3.3 10.6 Q3.4 11.5 4.3 11.5 H8.8 Q9.7 11.5 9.8 10.6 L10.5 3.6 M4.5 3.4 V1.9 Q4.5 1.2 5.2 1.2 H8.7 Q9.4 1.2 9.4 1.9 V3.4" fill="none" stroke="#d0d0d0" stroke-width="1.2" stroke-linejoin="round"/></svg>
<svg class="ic" style="left:432px;top:591.06px" width="14" height="14" viewBox="0 0 14 14"><rect x="2.2" y="6.7" width="9.4" height="5" rx="0.7" fill="none" stroke="#d0d0d0" stroke-width="1.2"/><path d="M4 6.7 V4.6 A2.9 2.9 0 0 1 9.8 4.6 V4.2" fill="none" stroke="#d0d0d0" stroke-width="1.2"/><rect x="6.2" y="8.4" width="1.2" height="1.3" fill="#d0d0d0"/></svg>
</div>
<svg class="ic" style="left:481px;top:202px" width="9" height="6" viewBox="0 0 9 6"><path d="M4.5 0.5 L8.5 5 H0.5 Z" fill="#5c5c5c"/></svg>
<div class="a" style="left:482px;top:213px;width:8px;height:187px;border-radius:4px;background:#585858"></div>
<svg class="ic" style="left:481px;top:780px" width="9" height="6" viewBox="0 0 9 6"><path d="M4.5 5 L8.5 0.5 H0.5 Z" fill="#5c5c5c"/></svg>
<svg class="ic" style="left:18px;top:793px" width="6" height="9" viewBox="0 0 6 9"><path d="M0.5 4.5 L5 0.5 V8.5 Z" fill="#5c5c5c"/></svg>
<svg class="ic" style="left:469px;top:793px" width="6" height="9" viewBox="0 0 6 9"><path d="M5.5 4.5 L1 0.5 V8.5 Z" fill="#5c5c5c"/></svg>
<div class="a" style="left:363px;top:302px;width:75px;height:29px;background:#454545;border-radius:6px;box-shadow:0 3px 6px rgba(0,0,0,0.25)"></div>
<svg class="ic" style="left:393px;top:330px" width="16" height="6" viewBox="0 0 16 6"><path d="M0 0 H16 L8 5.5 Z" fill="#454545"/></svg>
<div class="a" style="left:369px;top:309.5px;font-size:12.4px;line-height:15px;letter-spacing:-0.508px;color:#f0f0f0">Szerkesztés</div>
<div class="a" style="left:385px;top:335px;width:31px;height:31px;border:2px solid #e8000b;border-radius:5px"></div>
<div class="a" style="left:506px;top:120px;width:10px;height:697px;background:#595959"></div>
<svg class="ic" style="left:508.9px;top:455.4px" width="6" height="30" viewBox="0 0 6 30"><rect x="0.0" y="0.0" width="2" height="2.2" fill="#dedede"/><rect x="2.9" y="0.0" width="2" height="2.2" fill="#dedede"/><rect x="0.0" y="3.5" width="2" height="2.2" fill="#dedede"/><rect x="2.9" y="3.5" width="2" height="2.2" fill="#dedede"/><rect x="0.0" y="7.0" width="2" height="2.2" fill="#dedede"/><rect x="2.9" y="7.0" width="2" height="2.2" fill="#dedede"/><rect x="0.0" y="10.5" width="2" height="2.2" fill="#dedede"/><rect x="2.9" y="10.5" width="2" height="2.2" fill="#dedede"/><rect x="0.0" y="14.0" width="2" height="2.2" fill="#dedede"/><rect x="2.9" y="14.0" width="2" height="2.2" fill="#dedede"/><rect x="0.0" y="17.5" width="2" height="2.2" fill="#dedede"/><rect x="2.9" y="17.5" width="2" height="2.2" fill="#dedede"/><rect x="0.0" y="21.0" width="2" height="2.2" fill="#dedede"/><rect x="2.9" y="21.0" width="2" height="2.2" fill="#dedede"/><rect x="0.0" y="24.5" width="2" height="2.2" fill="#dedede"/><rect x="2.9" y="24.5" width="2" height="2.2" fill="#dedede"/></svg>
<div class="a" style="left:531px;top:120px;width:1136px;height:40px;background:#404040"></div>
<div class="a" style="left:547.5px;top:134.5px;font-size:12px;line-height:15px;color:#dcdcdc">Alapadatok</div>
<div class="a" style="left:644px;top:134.5px;font-size:12px;line-height:15px;color:#dcdcdc">NAV kapcsolatok</div>
<div class="a" style="left:771px;top:134.5px;font-size:12px;line-height:15px;color:#448ef8">Jogosultságok</div>
<div class="a" style="left:883px;top:134.5px;font-size:12px;line-height:15px;color:#dcdcdc">Szolgáltatók</div>
<div class="a" style="left:771px;top:159px;width:76px;height:2px;background:#448ef8"></div>
<div class="a" style="left:530px;top:120px;width:439px;height:40px;border:2px solid #e8000b;border-radius:5px"></div>
<div class="a" style="left:530px;top:175px;width:277px;height:28px;border:1px solid #5a5a5a;border-radius:5px"></div>
<svg class="ic" style="left:544px;top:182px" width="12" height="14" viewBox="0 0 12 14"><rect x="1.7" y="3.7" width="5.3" height="8.6" rx="0.9" fill="none" stroke="#d0d0d0" stroke-width="1.15"/><path d="M3.6 3.7 V2.2 Q3.6 1.6 4.2 1.6 H9.9 Q10.5 1.6 10.5 2.2 V10.7 Q10.5 11.3 9.9 11.3 H7" fill="none" stroke="#d0d0d0" stroke-width="1.15"/></svg>
<div class="a" style="left:563px;top:183px;font-size:12.05px;line-height:15px">Jogosultságok másolása másik partner alól</div>
<div class="a" style="left:1477px;top:175px;width:190px;height:28px;background:#448ef8;border-radius:5px"></div>
<svg class="ic" style="left:1491px;top:183px" width="12" height="12" viewBox="0 0 12 12"><path d="M5.75 0.8 V11.2 M0.5 6 H11" stroke="#fff" stroke-width="1.4"/></svg>
<div class="a" style="left:1510px;top:182.5px;font-size:11.9px;line-height:15px;color:#fff">Új jogosultság hozzáadása</div>
<div class="a" style="left:531px;top:218px;width:1135px;height:34px;background:#2a2a2a;border-radius:6px 6px 0 0"></div>
<div class="a" style="left:993px;top:218px;width:1px;height:34px;background:#383838"></div>
<div class="a" style="left:1456px;top:218px;width:1px;height:34px;background:#383838"></div>
<div class="a" style="left:1561px;top:218px;width:1px;height:34px;background:#383838"></div>
<div class="a" style="left:538px;top:228px;font-size:12px;font-weight:bold;line-height:15px;color:#e8e8e8">Név</div>
<div class="a" style="left:1001px;top:228px;font-size:11.4px;font-weight:bold;line-height:15px;color:#e8e8e8">Szerepkör</div>
<div class="a" style="left:1476px;top:228px;font-size:11.8px;font-weight:bold;line-height:15px;color:#e8e8e8">Helyi admin</div>
<div class="a" style="left:1585px;top:228px;font-size:12px;font-weight:bold;line-height:15px;color:#e8e8e8">Műveletek</div>
<div class="a" style="left:531px;top:252.3px;width:1135px;height:306.8px;overflow:hidden;border-radius:0 0 4px 4px">
<div class="a" style="left:0;top:0.0px;width:1135px;height:34.18px;background:#404040"></div>
<div class="a" style="left:0;top:33.18px;width:1135px;height:1px;background:#363636"></div>
<div class="a" style="left:462px;top:0.0px;width:1px;height:34.18px;background:#363636"></div>
<div class="a" style="left:925px;top:0.0px;width:1px;height:34.18px;background:#363636"></div>
<div class="a" style="left:1030px;top:0.0px;width:1px;height:34.18px;background:#363636"></div>
<div class="a" style="left:7px;top:1.0px;font-size:12px;line-height:33.18px;letter-spacing:0.107px">Vivien Demeter</div>
<div class="a" style="left:470px;top:1.0px;font-size:12.2px;line-height:33.18px">Alapértelmezett szerepkör</div>
<div class="a" style="left:925px;top:1.0px;width:105px;text-align:center;font-size:12.3px;line-height:33.18px">Nem</div>
<svg class="ic" style="left:1063.8px;top:10.0px" width="14" height="14" viewBox="0 0 14 14"><path d="M2.4 9.8 L2.8 7 L8.3 1.5 Q8.9 0.9 9.5 1.5 L10.5 2.5 Q11.1 3.1 10.5 3.7 L5.1 9.2 Z" fill="none" stroke="#d0d0d0" stroke-width="1.15" stroke-linejoin="round"/><line x1="0.9" y1="11.55" x2="12.1" y2="11.55" stroke="#d0d0d0" stroke-width="1.4"/></svg>
<svg class="ic" style="left:1089.6px;top:10.0px" width="14" height="14" viewBox="0 0 14 14"><path d="M1.2 3.6 H11.7 M2.5 3.6 L3.3 10.6 Q3.4 11.5 4.3 11.5 H8.8 Q9.7 11.5 9.8 10.6 L10.5 3.6 M4.5 3.4 V1.9 Q4.5 1.2 5.2 1.2 H8.7 Q9.4 1.2 9.4 1.9 V3.4" fill="none" stroke="#d0d0d0" stroke-width="1.2" stroke-linejoin="round"/></svg>
<div class="a" style="left:0;top:34.18px;width:1135px;height:34.18px;background:#404040"></div>
<div class="a" style="left:0;top:67.36px;width:1135px;height:1px;background:#363636"></div>
<div class="a" style="left:462px;top:34.18px;width:1px;height:34.18px;background:#363636"></div>
<div class="a" style="left:925px;top:34.18px;width:1px;height:34.18px;background:#363636"></div>
<div class="a" style="left:1030px;top:34.18px;width:1px;height:34.18px;background:#363636"></div>
<div class="a" style="left:7px;top:35.18px;font-size:12px;line-height:33.18px;letter-spacing:-0.218px">Tamás Bárdos</div>
<div class="a" style="left:470px;top:35.18px;font-size:12.2px;line-height:33.18px">Alapértelmezett szerepkör</div>
<div class="a" style="left:925px;top:35.18px;width:105px;text-align:center;font-size:12.3px;line-height:33.18px">Nem</div>
<svg class="ic" style="left:1063.8px;top:44.18px" width="14" height="14" viewBox="0 0 14 14"><path d="M2.4 9.8 L2.8 7 L8.3 1.5 Q8.9 0.9 9.5 1.5 L10.5 2.5 Q11.1 3.1 10.5 3.7 L5.1 9.2 Z" fill="none" stroke="#d0d0d0" stroke-width="1.15" stroke-linejoin="round"/><line x1="0.9" y1="11.55" x2="12.1" y2="11.55" stroke="#d0d0d0" stroke-width="1.4"/></svg>
<svg class="ic" style="left:1089.6px;top:44.18px" width="14" height="14" viewBox="0 0 14 14"><path d="M1.2 3.6 H11.7 M2.5 3.6 L3.3 10.6 Q3.4 11.5 4.3 11.5 H8.8 Q9.7 11.5 9.8 10.6 L10.5 3.6 M4.5 3.4 V1.9 Q4.5 1.2 5.2 1.2 H8.7 Q9.4 1.2 9.4 1.9 V3.4" fill="none" stroke="#d0d0d0" stroke-width="1.2" stroke-linejoin="round"/></svg>
<div class="a" style="left:0;top:68.36px;width:1135px;height:34.18px;background:#404040"></div>
<div class="a" style="left:0;top:101.53999999999999px;width:1135px;height:1px;background:#363636"></div>
<div class="a" style="left:462px;top:68.36px;width:1px;height:34.18px;background:#363636"></div>
<div class="a" style="left:925px;top:68.36px;width:1px;height:34.18px;background:#363636"></div>
<div class="a" style="left:1030px;top:68.36px;width:1px;height:34.18px;background:#363636"></div>
<div class="a" style="left:7px;top:69.36px;font-size:12px;line-height:33.18px;letter-spacing:-0.03px">Levente Lépő</div>
<div class="a" style="left:470px;top:69.36px;font-size:12.2px;line-height:33.18px">Alapértelmezett szerepkör</div>
<div class="a" style="left:925px;top:69.36px;width:105px;text-align:center;font-size:12.3px;line-height:33.18px">Nem</div>
<svg class="ic" style="left:1063.8px;top:78.36px" width="14" height="14" viewBox="0 0 14 14"><path d="M2.4 9.8 L2.8 7 L8.3 1.5 Q8.9 0.9 9.5 1.5 L10.5 2.5 Q11.1 3.1 10.5 3.7 L5.1 9.2 Z" fill="none" stroke="#d0d0d0" stroke-width="1.15" stroke-linejoin="round"/><line x1="0.9" y1="11.55" x2="12.1" y2="11.55" stroke="#d0d0d0" stroke-width="1.4"/></svg>
<svg class="ic" style="left:1089.6px;top:78.36px" width="14" height="14" viewBox="0 0 14 14"><path d="M1.2 3.6 H11.7 M2.5 3.6 L3.3 10.6 Q3.4 11.5 4.3 11.5 H8.8 Q9.7 11.5 9.8 10.6 L10.5 3.6 M4.5 3.4 V1.9 Q4.5 1.2 5.2 1.2 H8.7 Q9.4 1.2 9.4 1.9 V3.4" fill="none" stroke="#d0d0d0" stroke-width="1.2" stroke-linejoin="round"/></svg>
<div class="a" style="left:0;top:102.53999999999999px;width:1135px;height:34.18px;background:#404040"></div>
<div class="a" style="left:0;top:135.72px;width:1135px;height:1px;background:#363636"></div>
<div class="a" style="left:462px;top:102.53999999999999px;width:1px;height:34.18px;background:#363636"></div>
<div class="a" style="left:925px;top:102.53999999999999px;width:1px;height:34.18px;background:#363636"></div>
<div class="a" style="left:1030px;top:102.53999999999999px;width:1px;height:34.18px;background:#363636"></div>
<div class="a" style="left:7px;top:103.53999999999999px;font-size:12px;line-height:33.18px;letter-spacing:-0.01px">Dóra Feil</div>
<div class="a" style="left:470px;top:103.53999999999999px;font-size:12.2px;line-height:33.18px">Alapértelmezett szerepkör</div>
<div class="a" style="left:925px;top:103.53999999999999px;width:105px;text-align:center;font-size:12.3px;line-height:33.18px">Nem</div>
<svg class="ic" style="left:1063.8px;top:112.53999999999999px" width="14" height="14" viewBox="0 0 14 14"><path d="M2.4 9.8 L2.8 7 L8.3 1.5 Q8.9 0.9 9.5 1.5 L10.5 2.5 Q11.1 3.1 10.5 3.7 L5.1 9.2 Z" fill="none" stroke="#d0d0d0" stroke-width="1.15" stroke-linejoin="round"/><line x1="0.9" y1="11.55" x2="12.1" y2="11.55" stroke="#d0d0d0" stroke-width="1.4"/></svg>
<svg class="ic" style="left:1089.6px;top:112.53999999999999px" width="14" height="14" viewBox="0 0 14 14"><path d="M1.2 3.6 H11.7 M2.5 3.6 L3.3 10.6 Q3.4 11.5 4.3 11.5 H8.8 Q9.7 11.5 9.8 10.6 L10.5 3.6 M4.5 3.4 V1.9 Q4.5 1.2 5.2 1.2 H8.7 Q9.4 1.2 9.4 1.9 V3.4" fill="none" stroke="#d0d0d0" stroke-width="1.2" stroke-linejoin="round"/></svg>
<div class="a" style="left:0;top:136.72px;width:1135px;height:34.18px;background:#404040"></div>
<div class="a" style="left:0;top:169.9px;width:1135px;height:1px;background:#363636"></div>
<div class="a" style="left:462px;top:136.72px;width:1px;height:34.18px;background:#363636"></div>
<div class="a" style="left:925px;top:136.72px;width:1px;height:34.18px;background:#363636"></div>
<div class="a" style="left:1030px;top:136.72px;width:1px;height:34.18px;background:#363636"></div>
<div class="a" style="left:7px;top:137.72px;font-size:12px;line-height:33.18px;letter-spacing:0.13px">Zoltán Tóth</div>
<div class="a" style="left:470px;top:137.72px;font-size:12.2px;line-height:33.18px">Alapértelmezett szerepkör</div>
<div class="a" style="left:925px;top:137.72px;width:105px;text-align:center;font-size:12.3px;line-height:33.18px">Nem</div>
<svg class="ic" style="left:1063.8px;top:146.72px" width="14" height="14" viewBox="0 0 14 14"><path d="M2.4 9.8 L2.8 7 L8.3 1.5 Q8.9 0.9 9.5 1.5 L10.5 2.5 Q11.1 3.1 10.5 3.7 L5.1 9.2 Z" fill="none" stroke="#d0d0d0" stroke-width="1.15" stroke-linejoin="round"/><line x1="0.9" y1="11.55" x2="12.1" y2="11.55" stroke="#d0d0d0" stroke-width="1.4"/></svg>
<svg class="ic" style="left:1089.6px;top:146.72px" width="14" height="14" viewBox="0 0 14 14"><path d="M1.2 3.6 H11.7 M2.5 3.6 L3.3 10.6 Q3.4 11.5 4.3 11.5 H8.8 Q9.7 11.5 9.8 10.6 L10.5 3.6 M4.5 3.4 V1.9 Q4.5 1.2 5.2 1.2 H8.7 Q9.4 1.2 9.4 1.9 V3.4" fill="none" stroke="#d0d0d0" stroke-width="1.2" stroke-linejoin="round"/></svg>
<div class="a" style="left:0;top:170.9px;width:1135px;height:34.18px;background:#404040"></div>
<div class="a" style="left:0;top:204.08px;width:1135px;height:1px;background:#363636"></div>
<div class="a" style="left:462px;top:170.9px;width:1px;height:34.18px;background:#363636"></div>
<div class="a" style="left:925px;top:170.9px;width:1px;height:34.18px;background:#363636"></div>
<div class="a" style="left:1030px;top:170.9px;width:1px;height:34.18px;background:#363636"></div>
<div class="a" style="left:7px;top:171.9px;font-size:12px;line-height:33.18px;letter-spacing:-0.192px">András Puskás</div>
<div class="a" style="left:470px;top:171.9px;font-size:12.2px;line-height:33.18px">Alapértelmezett szerepkör</div>
<div class="a" style="left:925px;top:171.9px;width:105px;text-align:center;font-size:12.3px;line-height:33.18px">Nem</div>
<svg class="ic" style="left:1063.8px;top:180.9px" width="14" height="14" viewBox="0 0 14 14"><path d="M2.4 9.8 L2.8 7 L8.3 1.5 Q8.9 0.9 9.5 1.5 L10.5 2.5 Q11.1 3.1 10.5 3.7 L5.1 9.2 Z" fill="none" stroke="#d0d0d0" stroke-width="1.15" stroke-linejoin="round"/><line x1="0.9" y1="11.55" x2="12.1" y2="11.55" stroke="#d0d0d0" stroke-width="1.4"/></svg>
<svg class="ic" style="left:1089.6px;top:180.9px" width="14" height="14" viewBox="0 0 14 14"><path d="M1.2 3.6 H11.7 M2.5 3.6 L3.3 10.6 Q3.4 11.5 4.3 11.5 H8.8 Q9.7 11.5 9.8 10.6 L10.5 3.6 M4.5 3.4 V1.9 Q4.5 1.2 5.2 1.2 H8.7 Q9.4 1.2 9.4 1.9 V3.4" fill="none" stroke="#d0d0d0" stroke-width="1.2" stroke-linejoin="round"/></svg>
<div class="a" style="left:0;top:205.07999999999998px;width:1135px;height:34.18px;background:#404040"></div>
<div class="a" style="left:0;top:238.26px;width:1135px;height:1px;background:#363636"></div>
<div class="a" style="left:462px;top:205.07999999999998px;width:1px;height:34.18px;background:#363636"></div>
<div class="a" style="left:925px;top:205.07999999999998px;width:1px;height:34.18px;background:#363636"></div>
<div class="a" style="left:1030px;top:205.07999999999998px;width:1px;height:34.18px;background:#363636"></div>
<div class="a" style="left:7px;top:206.07999999999998px;font-size:12px;line-height:33.18px;letter-spacing:-0.192px">András Puskás</div>
<div class="a" style="left:470px;top:206.07999999999998px;font-size:12.2px;line-height:33.18px">Alapértelmezett szerepkör</div>
<div class="a" style="left:925px;top:206.07999999999998px;width:105px;text-align:center;font-size:12.3px;line-height:33.18px">Nem</div>
<svg class="ic" style="left:1063.8px;top:215.07999999999998px" width="14" height="14" viewBox="0 0 14 14"><path d="M2.4 9.8 L2.8 7 L8.3 1.5 Q8.9 0.9 9.5 1.5 L10.5 2.5 Q11.1 3.1 10.5 3.7 L5.1 9.2 Z" fill="none" stroke="#d0d0d0" stroke-width="1.15" stroke-linejoin="round"/><line x1="0.9" y1="11.55" x2="12.1" y2="11.55" stroke="#d0d0d0" stroke-width="1.4"/></svg>
<svg class="ic" style="left:1089.6px;top:215.07999999999998px" width="14" height="14" viewBox="0 0 14 14"><path d="M1.2 3.6 H11.7 M2.5 3.6 L3.3 10.6 Q3.4 11.5 4.3 11.5 H8.8 Q9.7 11.5 9.8 10.6 L10.5 3.6 M4.5 3.4 V1.9 Q4.5 1.2 5.2 1.2 H8.7 Q9.4 1.2 9.4 1.9 V3.4" fill="none" stroke="#d0d0d0" stroke-width="1.2" stroke-linejoin="round"/></svg>
<div class="a" style="left:0;top:239.26px;width:1135px;height:34.18px;background:#404040"></div>
<div class="a" style="left:0;top:272.44px;width:1135px;height:1px;background:#363636"></div>
<div class="a" style="left:462px;top:239.26px;width:1px;height:34.18px;background:#363636"></div>
<div class="a" style="left:925px;top:239.26px;width:1px;height:34.18px;background:#363636"></div>
<div class="a" style="left:1030px;top:239.26px;width:1px;height:34.18px;background:#363636"></div>
<div class="a" style="left:7px;top:240.26px;font-size:12px;line-height:33.18px;letter-spacing:0.178px">Dominik Blahó</div>
<div class="a" style="left:470px;top:240.26px;font-size:12.2px;line-height:33.18px">Alapértelmezett szerepkör</div>
<div class="a" style="left:925px;top:240.26px;width:105px;text-align:center;font-size:12.3px;line-height:33.18px">Igen</div>
<svg class="ic" style="left:1063.8px;top:249.26px" width="14" height="14" viewBox="0 0 14 14"><path d="M2.4 9.8 L2.8 7 L8.3 1.5 Q8.9 0.9 9.5 1.5 L10.5 2.5 Q11.1 3.1 10.5 3.7 L5.1 9.2 Z" fill="none" stroke="#d0d0d0" stroke-width="1.15" stroke-linejoin="round"/><line x1="0.9" y1="11.55" x2="12.1" y2="11.55" stroke="#d0d0d0" stroke-width="1.4"/></svg>
<svg class="ic" style="left:1089.6px;top:249.26px" width="14" height="14" viewBox="0 0 14 14"><path d="M1.2 3.6 H11.7 M2.5 3.6 L3.3 10.6 Q3.4 11.5 4.3 11.5 H8.8 Q9.7 11.5 9.8 10.6 L10.5 3.6 M4.5 3.4 V1.9 Q4.5 1.2 5.2 1.2 H8.7 Q9.4 1.2 9.4 1.9 V3.4" fill="none" stroke="#d0d0d0" stroke-width="1.2" stroke-linejoin="round"/></svg>
<div class="a" style="left:0;top:273.44px;width:1135px;height:34.18px;background:#404040"></div>
<div class="a" style="left:462px;top:273.44px;width:1px;height:34.18px;background:#363636"></div>
<div class="a" style="left:925px;top:273.44px;width:1px;height:34.18px;background:#363636"></div>
<div class="a" style="left:1030px;top:273.44px;width:1px;height:34.18px;background:#363636"></div>
<div class="a" style="left:7px;top:274.44px;font-size:12px;line-height:33.18px;letter-spacing:0.053px">Árpád Zoltán Sárosi</div>
<div class="a" style="left:470px;top:274.44px;font-size:12.2px;line-height:33.18px">Alapértelmezett szerepkör</div>
<div class="a" style="left:925px;top:274.44px;width:105px;text-align:center;font-size:12.3px;line-height:33.18px">Nem</div>
<svg class="ic" style="left:1063.8px;top:283.44px" width="14" height="14" viewBox="0 0 14 14"><path d="M2.4 9.8 L2.8 7 L8.3 1.5 Q8.9 0.9 9.5 1.5 L10.5 2.5 Q11.1 3.1 10.5 3.7 L5.1 9.2 Z" fill="none" stroke="#d0d0d0" stroke-width="1.15" stroke-linejoin="round"/><line x1="0.9" y1="11.55" x2="12.1" y2="11.55" stroke="#d0d0d0" stroke-width="1.4"/></svg>
<svg class="ic" style="left:1089.6px;top:283.44px" width="14" height="14" viewBox="0 0 14 14"><path d="M1.2 3.6 H11.7 M2.5 3.6 L3.3 10.6 Q3.4 11.5 4.3 11.5 H8.8 Q9.7 11.5 9.8 10.6 L10.5 3.6 M4.5 3.4 V1.9 Q4.5 1.2 5.2 1.2 H8.7 Q9.4 1.2 9.4 1.9 V3.4" fill="none" stroke="#d0d0d0" stroke-width="1.2" stroke-linejoin="round"/></svg>
</div>
</body></html>
